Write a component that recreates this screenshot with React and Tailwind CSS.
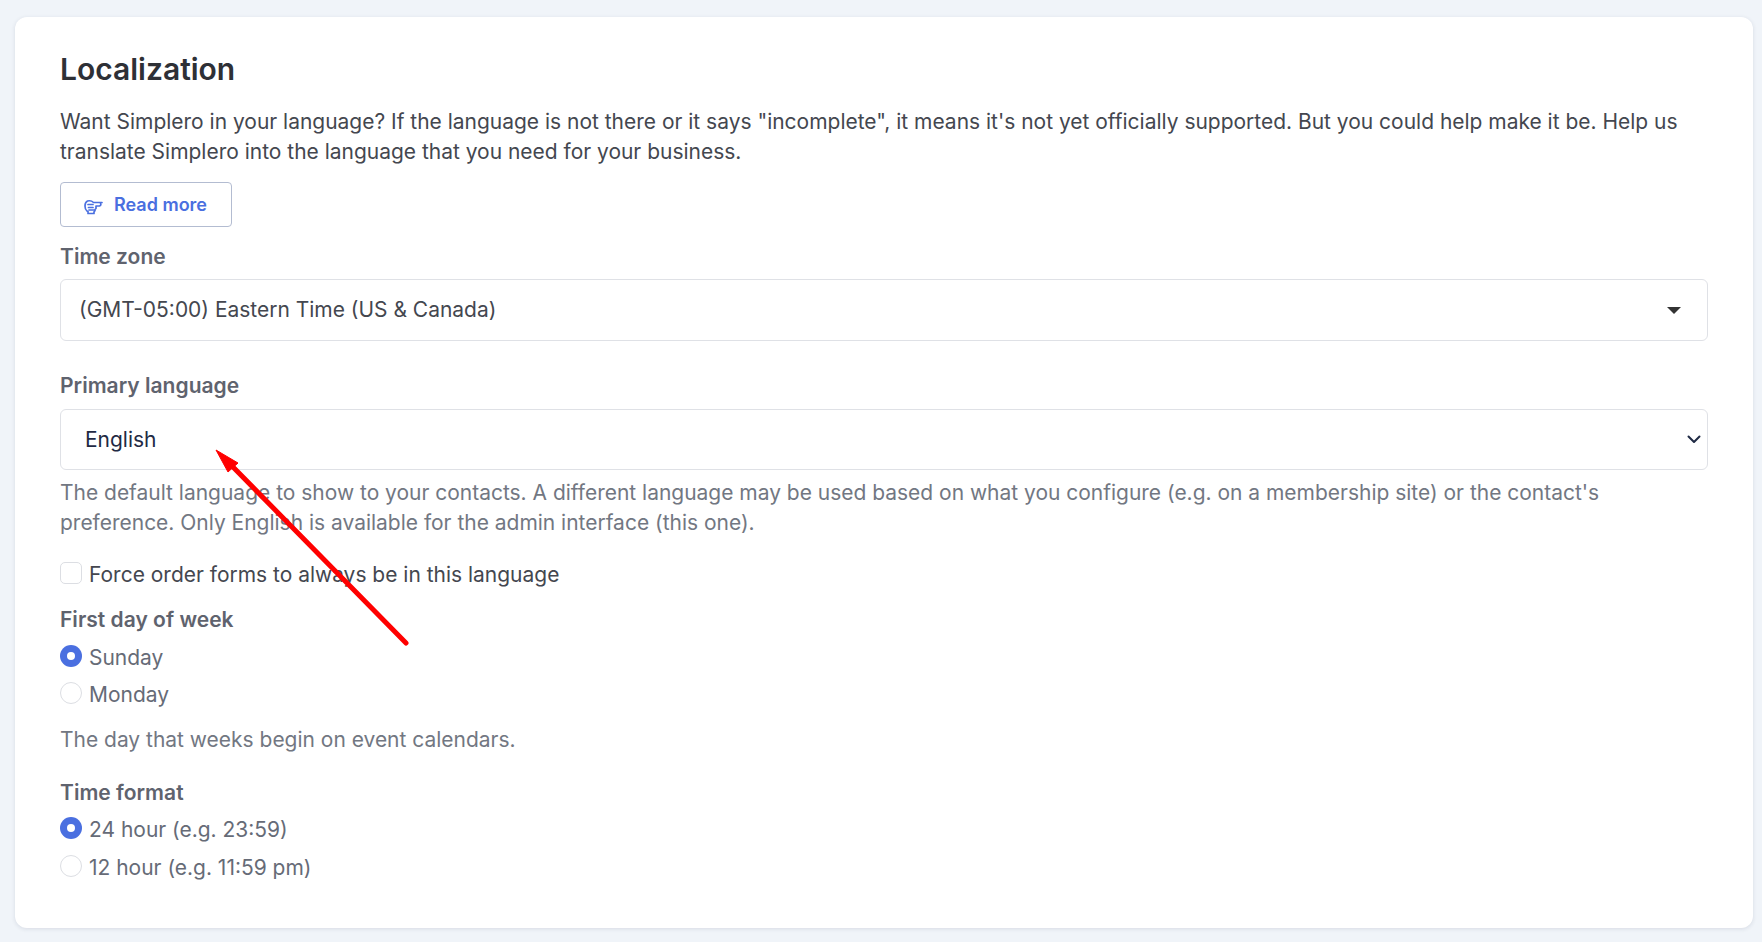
import React from "react";

function Radio({ checked, label, className }) {
  return (
    <label className={`flex h-[30px] items-center gap-[7px] text-[#666b77] ${className}`}>
      {checked ? (
        <span className="flex size-[22px] -translate-y-0.5 items-center justify-center rounded-full bg-[#4a6fe0]">
          <span className="size-2 rounded-full bg-white" />
        </span>
      ) : (
        <span className="size-[22px] -translate-y-0.5 rounded-full border border-[#dcdee3] bg-white" />
      )}
      {label}
    </label>
  );
}

function Label({ children, className }) {
  return <div className={`h-[30px] text-[21px] font-semibold tracking-[0.02px] text-[#5f636e] ${className}`}>{children}</div>;
}

function PointIcon() {
  return (
    <svg className="h-[16px] w-[19px] translate-y-0.5" viewBox="0 0 19 16" fill="none" stroke="currentColor" strokeWidth="1.7" strokeLinecap="round" strokeLinejoin="round">
      <path d="M18 3.5H9.5C8 2 5.5 1.5 3.5 2 1.5 3 1 5 1 7s.5 4 2 5l1 .5v2h6V13l1-1.5V10.5l1-1V7h3.5a1.8 1.8 0 0 0 0-3.5" />
      <path d="M4 5.5h5M4.5 8.5H9M5 11h5" />
    </svg>
  );
}

export default function App() {
  return (
    <div className="min-h-screen bg-[#f0f4f9] pt-[17px] pr-[9px] pl-[15px] font-['Inter',sans-serif] text-[20.97px] leading-[30px]">
      <div className="relative h-[911px] rounded-xl bg-white px-[45px] pt-[31px] shadow-[0_1px_4px_rgba(30,40,70,0.12)]">
        <h2 className="text-[30px] leading-[42px] font-semibold text-[#2e3036]">Localization</h2>
        <p className="mt-[17px] text-[#44474f]">
          Want Simplero in your language? If the language is not there or it says "incomplete", it means it's not yet officially supported. But you could help make it be. Help us translate Simplero into the language that you need for your business.
        </p>

        <button className="mt-[15px] flex h-[45px] w-[172px] items-center gap-[11px] rounded border border-[#b3bcd1] pl-[23px] text-[18px] font-semibold text-[#4a6fe0]">
          <PointIcon />
          Read more
        </button>

        <Label className="mt-[15px]">Time zone</Label>
        <div className="mt-[7px] flex h-[62px] items-center justify-between rounded-md border border-[#dfe1e6] pr-[26px] pl-[18px] text-[#44474f]">
          <span>(GMT-05:00) Eastern Time (US &amp; Canada)</span>
          <span className="h-0 w-0 border-x-[7px] border-t-[7px] border-x-transparent border-t-[#333]" />
        </div>

        <Label className="mt-[30px]">Primary language</Label>
        <div className="relative mt-2">
          <select className="h-[61px] w-full appearance-none rounded-md border border-[#dfe1e6] bg-white pl-[24px] text-[#1f2a44]">
            <option>English</option>
          </select>
          <svg className="absolute top-[23px] right-[7px] size-[14px]" viewBox="0 0 14 14" fill="none" stroke="#1f2a44" strokeWidth="2" strokeLinecap="round" strokeLinejoin="round">
            <path d="M1.5 4.5 7 10l5.5-5.5" />
          </svg>
        </div>
        <p className="mt-[8px] text-[#727782]">
          The default language to show to your contacts. A different language may be used based on what you configure (e.g. on a membership site) or the contact's preference. Only English is available for the admin interface (this one).
        </p>

        <label className="mt-[22px] flex h-[30px] items-center gap-[7px] text-[#44474f]">
          <span className="size-[22px] -translate-y-0.5 rounded-[5px] border border-[#dcdee3] bg-white" />
          Force order forms to always be in this language
        </label>

        <Label className="mt-[15px]">First day of week</Label>
        <Radio checked label="Sunday" className="mt-2" />
        <Radio label="Monday" className="mt-[7px]" />
        <p className="mt-[15px] text-[#727782]">The day that weeks begin on event calendars.</p>

        <Label className="mt-[23px]">Time format</Label>
        <Radio checked label="24 hour (e.g. 23:59)" className="mt-[7px]" />
        <Radio label="12 hour (e.g. 11:59 pm)" className="mt-[8px]" />

        {/* red annotation arrow on top of the form */}
        <svg className="pointer-events-none absolute top-[420px] left-[190px] h-[240px] w-[220px]" viewBox="0 0 220 240">
          <path d="M201 206 28 30" stroke="#ff0000" strokeWidth="5" strokeLinecap="round" fill="none" />
          <path d="M11 13 33 26 23 35Z" fill="#ff0000" stroke="#ff0000" strokeWidth="1" />
        </svg>
      </div>
    </div>
  );
}
